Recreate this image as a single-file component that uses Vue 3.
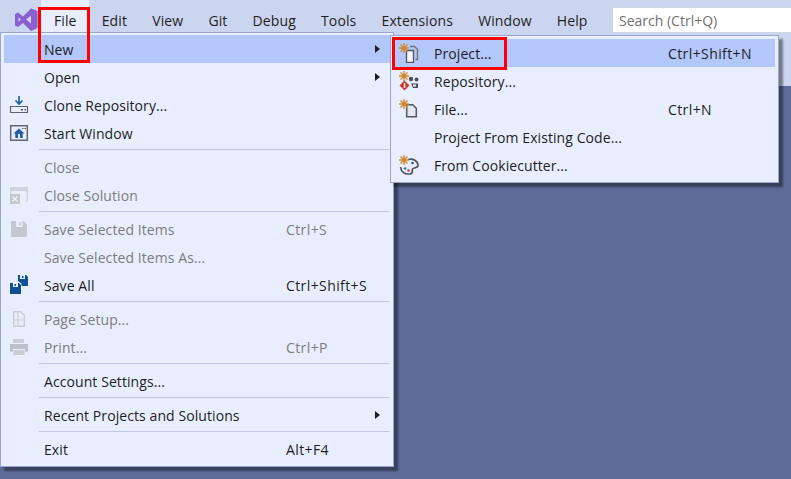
<template>
  <div class="app">
    <div class="titlebar">
      <svg class="logo" width="23" height="23" viewBox="0 0 23 23">
        <path d="M0 6l3-1.500 5 4L16 0.500 22.500 3v17L16 23l-8-8-5 4-3-1.500zM3.500 9.200v4.600l2.400-2.300zM11 11.500l5 4v-8z" fill="#8a5fd0" fill-rule="evenodd" />
      </svg>
      <nav class="menubar">
        <span v-for="m in menus" :key="m" class="top-item" :class="{ open: m === 'File' }">{{ m }}</span>
      </nav>
      <div class="search">Search (Ctrl+Q)</div>
    </div>
    <div class="toolbar"></div>
    <div class="workspace"></div>

    <div class="menu file-menu">
      <template v-for="(item, i) in fileItems" :key="i">
        <div v-if="item.sep" class="sep"></div>
        <div v-else class="item" :class="{ active: item.active, off: item.off }">
          <span class="ico"><MenuIcon :name="item.icon" /></span>
          <span class="label">{{ item.label }}</span>
          <span class="keys">{{ item.keys }}</span>
          <span class="arrow" :class="{ hide: !item.sub }"></span>
        </div>
      </template>
    </div>

    <div class="menu new-menu">
      <div v-for="item in newItems" :key="item.label" class="item" :class="{ active: item.active }">
        <span class="ico"><MenuIcon :name="item.icon" /></span>
        <span class="label">{{ item.label }}</span>
        <span class="keys">{{ item.keys }}</span>
      </div>
    </div>

    <div class="mark mark-file"></div>
    <div class="mark mark-project"></div>
  </div>
</template>

<script setup>
import { h } from 'vue'

const menus = ['File', 'Edit', 'View', 'Git', 'Debug', 'Tools', 'Extensions', 'Window', 'Help']

const fileItems = [
  { label: 'New', sub: true, active: true },
  { label: 'Open', sub: true },
  { label: 'Clone Repository...', icon: 'clone' },
  { label: 'Start Window', icon: 'start' },
  { sep: true },
  { label: 'Close', off: true },
  { label: 'Close Solution', off: true, icon: 'closeSol' },
  { sep: true },
  { label: 'Save Selected Items', keys: 'Ctrl+S', off: true, icon: 'save' },
  { label: 'Save Selected Items As...', off: true },
  { label: 'Save All', keys: 'Ctrl+Shift+S', icon: 'saveAll' },
  { sep: true },
  { label: 'Page Setup...', off: true, icon: 'page' },
  { label: 'Print...', keys: 'Ctrl+P', off: true, icon: 'print' },
  { sep: true },
  { label: 'Account Settings...' },
  { sep: true },
  { label: 'Recent Projects and Solutions', sub: true },
  { sep: true },
  { label: 'Exit', keys: 'Alt+F4' }
]

const newItems = [
  { label: 'Project...', keys: 'Ctrl+Shift+N', active: true, icon: 'project' },
  { label: 'Repository...', icon: 'repo' },
  { label: 'File...', keys: 'Ctrl+N', icon: 'file' },
  { label: 'Project From Existing Code...' },
  { label: 'From Cookiecutter...', icon: 'cookie' }
]

// the orange star that sits on the "new" icons
const star = () => h('path', {
  d: 'M5 0v10M0 5h10M1.500 1.500l7 7M8.500 1.500l-7 7',
  stroke: '#d0882a',
  'stroke-width': 1.400,
  fill: 'none'
})

const p = (d, fill, extra = {}) => h('path', { d, fill, ...extra })

const icons = {
  clone: () => [
    p('M10 1v8M6.500 5.500L10 9l3.500-3.500', 'none', { stroke: '#1b5fa8', 'stroke-width': 1.600 }),
    p('M1.500 11.500h17v6h-17z', '#e9eefc', { stroke: '#5f6670', 'stroke-width': 1.200 }),
    p('M12 14h2v1.500h-2zM15.500 14h1.500v1.500h-1.500z', '#555')
  ],
  start: () => [
    p('M1.700 2.700h16.600v14.600H1.700z', '#e9eefc', { stroke: '#5f6670', 'stroke-width': 1.500 }),
    p('M13 5h1.500v1H13zM15.500 5H17v1h-1.500z', '#5f6670'),
    p('M10 5.500L4.500 10.500h1.800V15h7.400v-4.500h1.800z', '#1c5da5'),
    p('M9 11h2v4H9z', '#e9eefc')
  ],
  closeSol: () => [
    p('M1 2h18v15h-1.500V6H2.500v3H1z', '#cfd3dc'),
    p('M1 9h10v10H1z', '#c4c8d1'),
    p('M3.500 11.500l5 5M8.500 11.500l-5 5', 'none', { stroke: '#eef1f9', 'stroke-width': 1.400 })
  ],
  save: () => [
    p('M2 3a1 1 0 0 1 1-1h11.500L18 5.500V17a1 1 0 0 1-1 1H3a1 1 0 0 1-1-1z', '#c4c8d1'),
    p('M7 2h6.500v6H7z', '#e9eefc'),
    p('M10.500 3H12v3.500h-1.500z', '#c4c8d1')
  ],
  saveAll: () => [
    p('M1 8h9l2 2v9H1z', '#0e4f96'),
    p('M4 8h5v4H4z', '#e9eefc'),
    p('M5.500 9h1.500v2H5.500z', '#0e4f96'),
    p('M9 0h8l2 2v9h-6.500V8.500L9 6z', '#0e4f96'),
    p('M11 0h5v4h-5z', '#e9eefc'),
    p('M13 1h1.500v2H13z', '#0e4f96')
  ],
  page: () => [
    p('M4.700 2.700h7l3.600 3.600v10.900H4.700z', 'none', { stroke: '#c9cdd6', 'stroke-width': 1.400 }),
    p('M9 3v14M5 11h10', 'none', { stroke: '#c9cdd6', 'stroke-width': 1.200 })
  ],
  print: () => [
    p('M4 2h11v4H4z', '#c9cdd6'),
    p('M1 7h18v7.500h-3V12H4v2.500H1z', '#bcc0ca'),
    p('M4.500 13h11v5h-11z', '#c9cdd6')
  ],
  project: () => [
    p('M11 3.500h4.500l3 3V16.500h-2', 'none', { stroke: '#6f737c', 'stroke-width': 1.400 }),
    p('M7.500 7.500h7v12h-7z', '#f4f6fc', { stroke: '#55595f', 'stroke-width': 1.400 }),
    star()
  ],
  repo: () => [
    star(),
    p('M5.500 9.500l5 5-5 5-5-5z', '#d13b2a'),
    p('M4.800 12h1.500v5H4.800z', '#f4f6fc'),
    h('circle', { cx: 12, cy: 8, r: 2.200, fill: '#4a4f58' }),
    h('circle', { cx: 17.500, cy: 8.500, r: 1.900, fill: '#4a4f58' }),
    p('M12 12.500h7v4.500h-5z', '#4a4f58'),
    p('M14 13.500h3v2h-3z', '#e9eefc')
  ],
  file: () => [
    p('M7.700 5.700h6l3.600 3.600v8.400H7.700z', '#e4e7f1', { stroke: '#55595f', 'stroke-width': 1.500 }),
    star()
  ],
  cookie: () => [
    p('M9 4.500c5-1.500 10 1.500 10 6 0 3-4.500 1.500-5.500 3.500s1.500 4.500-2.500 5c-5 .500-9-2-9.500-7', 'none', { stroke: '#4a4f58', 'stroke-width': 1.600 }),
    h('circle', { cx: 13.500, cy: 8, r: 1.300, fill: '#4a4f58' }),
    h('circle', { cx: 6, cy: 13.500, r: 1.300, fill: '#2f6fb5' }),
    h('circle', { cx: 9.500, cy: 15.500, r: 1.200, fill: '#c0392b' }),
    star()
  ]
}

const MenuIcon = (props) => {
  if (!props.name) return null
  return h('svg', { width: 20, height: 20, viewBox: '0 0 20 20' }, icons[props.name]())
}
MenuIcon.props = ['name']
</script>

<style>
html,
body {
  margin: 0;
  overflow: hidden;
}
</style>

<style scoped>
.app {
  position: relative;
  width: 791px;
  height: 479px;
  display: flex;
  flex-direction: column;
  overflow: hidden;
  background: #5d6b99;
  font-family: "Open Sans", "Noto Sans", sans-serif;
  font-size: 14px;
  color: #1e1e1e;
}

.titlebar {
  height: 33px;
  flex: none;
  display: flex;
  align-items: flex-start;
  background: #ccd5f0;
}

.toolbar {
  height: 53px;
  flex: none;
  background: #ccd5f0;
}

.logo {
  margin: 8px 0 0 15px;
  flex: none;
}

.menubar {
  display: flex;
  margin-left: 3.400px;
  height: 33px;
}

.top-item {
  padding: 10px 12.600px 0;
  height: 23px;
  line-height: 21px;
  white-space: nowrap;
  letter-spacing: 0.1px;
}

.top-item.open {
  background: #e8eefd;
}

.search {
  margin-left: auto;
  margin-top: 7px;
  width: 172px;
  height: 24px;
  padding-left: 6px;
  line-height: 25px;
  background: #fff;
  border: 1px solid #cfd6e8;
  border-right: none;
  color: #717171;
}

.menu {
  position: absolute;
  box-sizing: border-box;
  background: #e8eefd;
  border: 1px solid #9ba7c9;
  box-shadow: 4px 4px 2px rgba(0, 0, 0, 0.42);
  letter-spacing: 0.08px;
}

.file-menu {
  left: 0;
  top: 32px;
  width: 394px;
  padding: 2px 3px 3px;
}

.new-menu {
  left: 390px;
  top: 35px;
  width: 389px;
  padding: 3px;
}

.item {
  display: flex;
  align-items: center;
  height: 28px;
  white-space: nowrap;
}

.item.active {
  background: #b3c7fb;
}

.item.off {
  color: #7d7d7d;
}

.ico {
  width: 40px;
  flex: none;
  display: flex;
  padding-left: 5px;
  box-sizing: border-box;
}

.file-menu .label {
  width: 242px;
  flex: none;
}

.file-menu .keys {
  width: 89px;
  flex: none;
}

.new-menu .label {
  width: 234px;
  flex: none;
}

.keys {
  letter-spacing: 0.4px;
}

.arrow {
  width: 0;
  height: 0;
  margin-bottom: 1px;
  border-left: 5px solid #1e1e1e;
  border-top: 4px solid transparent;
  border-bottom: 4px solid transparent;
}

.arrow.hide {
  visibility: hidden;
}

.sep {
  height: 1px;
  margin: 2px 1px 3px 35px;
  background: #bec8e6;
}

/* red call-outs drawn over the screenshot */
.mark {
  position: absolute;
  box-sizing: border-box;
  border: 3px solid #f00;
}

.mark-file {
  left: 38px;
  top: 7px;
  width: 52px;
  height: 56px;
}

.mark-project {
  left: 392px;
  top: 37px;
  width: 115px;
  height: 33px;
}
</style>
